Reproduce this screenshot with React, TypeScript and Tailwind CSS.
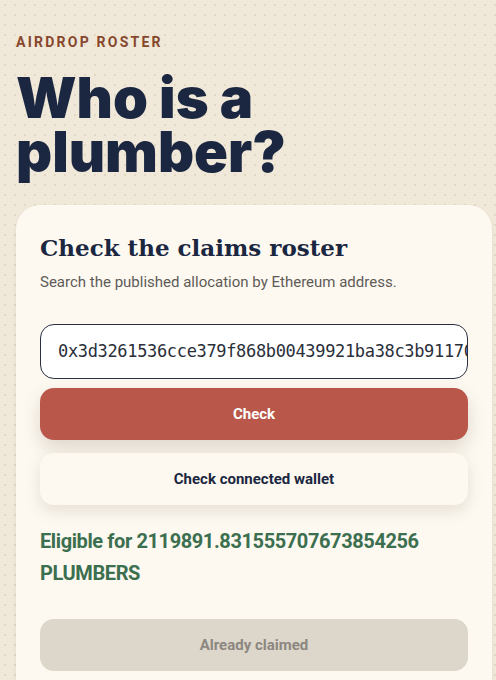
export default function App() {
  return (
    <div className="min-h-screen bg-[#f0e8d9] bg-[radial-gradient(circle,#e2d8c4_1px,transparent_1.2px)] bg-[size:10px_10px] overflow-hidden">
      <div className="pt-[34px] pl-4">
        <p className="text-[14px] font-bold tracking-[0.16em] text-[#86472d] [font-family:Roboto,sans-serif] leading-4">
          AIRDROP ROSTER
        </p>
        <h1 className="mt-[21px] text-[56px] leading-[54px] font-black text-[#1b2740] [font-family:Inter,sans-serif]">
          <span className="block">Who is a</span>
          <span className="block">plumber?</span>
        </h1>
      </div>

      <div className="ml-4 mt-[26px] w-[476px] rounded-[24px] bg-[#fdf9f1] px-6 pt-[27px] pb-10 shadow-[0_1px_3px_rgba(120,100,70,0.12)]">
        <h2 className="text-[23px] leading-8 font-bold text-[#1b2740] [font-family:'DejaVu_Serif',serif]">
          Check the claims roster
        </h2>
        <p className="mt-[6px] text-[15px] leading-6 text-[#5e5b57] [font-family:Roboto,sans-serif]">
          Search the published allocation by Ethereum address.
        </p>

        <div className="mt-[30px] flex flex-col">
          <div className="h-[55px] rounded-[14px] border border-[#2a3040] bg-white flex items-center pl-[17px] overflow-hidden">
            <span className="whitespace-nowrap text-[17px] text-[#2a2f3a] [font-family:'DejaVu_Sans_Mono',monospace] tracking-[-0.02em]">
              0x3d3261536cce379f868b00439921ba38c3b91170
            </span>
          </div>
          <button className="mt-[9px] h-[52px] rounded-[14px] bg-[#b9584a] text-white text-[15px] font-bold [font-family:Roboto,sans-serif] shadow-[0_8px_18px_rgba(90,60,40,0.18)]">
            Check
          </button>
          <button className="mt-[13px] h-[52px] rounded-[14px] bg-[#fdf9f1] text-[#1b2740] text-[15px] font-bold [font-family:Roboto,sans-serif] shadow-[0_6px_16px_rgba(90,70,40,0.14)]">
            Check connected wallet
          </button>
        </div>

        <p className="mt-[20px] text-[20px] leading-[32px] font-bold text-[#3b6f4f] [font-family:Roboto,sans-serif] tracking-[-0.02em]">
          Eligible for 2119891.831555707673854256
          <br />
          PLUMBERS
        </p>

        <button className="mt-[30px] w-full h-[52px] rounded-[14px] bg-[#ddd6ca] text-[#8c8781] text-[15px] font-bold [font-family:Roboto,sans-serif]">
          Already claimed
        </button>
      </div>
    </div>
  );
}
